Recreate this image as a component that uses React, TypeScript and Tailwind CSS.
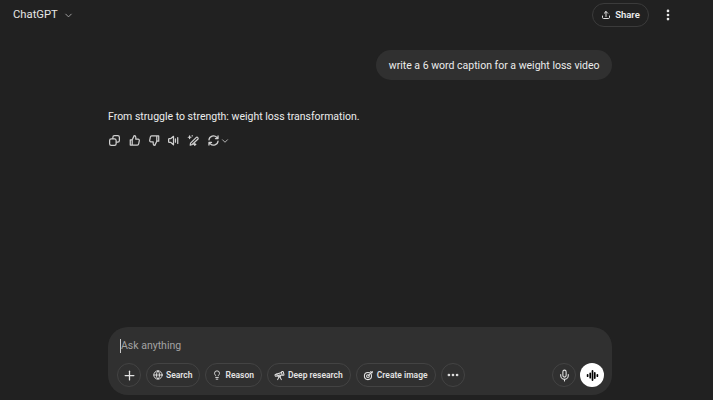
import { ChevronDown, Globe, Lightbulb, Mic, MoreHorizontal, MoreVertical, Plus, Telescope } from "lucide-react";
import type { ReactNode } from "react";

const font = { stroke: "currentColor", fill: "none", strokeWidth: 1.9, strokeLinecap: "round", strokeLinejoin: "round" } as const;

const Icon = ({ size = 13, children }: { size?: number; children: ReactNode }) => (
  <svg width={size} height={size} viewBox="0 0 20 20" {...font}>
    {children}
  </svg>
);

const actions = [
  <>
    <rect x="7.5" y="2.5" width="10" height="10" rx="2.5" />
    <rect x="2.5" y="7.5" width="10" height="10" rx="2.5" fill="#212121" />
  </>,
  <path d="M6.5 9l3-6.5c1.6 0 2.5 1 2.5 2.4V8h3.6c1.2 0 2 1 1.8 2.1l-1 5.2c-.2 1-1 1.7-2 1.7H6.5zM6.5 9H3.5v8h3" />,
  <path d="M13.5 11l-3 6.5c-1.6 0-2.5-1-2.5-2.4V12H4.4c-1.2 0-2-1-1.8-2.1l1-5.2c.2-1 1-1.7 2-1.7h7.9zM13.5 11h3V3h-3" />,
  <>
    <path d="M2.5 8v4c0 .6.4 1 1 1H6l4 3.5V3.5L6 7H3.5c-.6 0-1 .4-1 1z" />
    <path d="M13 7.5v5M16.5 5.5v9" />
  </>,
  <>
    <path d="M7.5 16.5L5 17l.5-3L14 5.5c.8-.8 2-.8 2.6 0 .7.7.7 1.8 0 2.5z" />
    <path d="M4 3v4M2 5h4M8 2.5v.5M12 14.5v3M10.5 16h3" />
  </>,
];

const Pill = ({ icon, label }: { icon: ReactNode; label: string }) => (
  <div className="flex h-6 items-center gap-[3px] rounded-full border border-[#434343] pr-[7px] pl-[6px] text-[8.5px] font-semibold text-[#e3e3e3]">
    {icon}
    <span className="whitespace-nowrap">{label}</span>
  </div>
);

const CircleBtn = ({ children }: { children: ReactNode }) => (
  <div className="flex size-6 items-center justify-center rounded-full border border-[#434343] text-[#e3e3e3]">{children}</div>
);

const App = () => {
  return (
    <div className="flex h-[400px] w-[713px] flex-col overflow-hidden bg-[#212121] font-['Roboto','Liberation_Sans',sans-serif] text-[#ececec]">
      <header className="flex h-[30px] flex-none items-center justify-between pr-[38px] pl-[13px]">
        <div className="flex items-center gap-[5px] text-[11.25px] text-[#e6e6e6]">
          ChatGPT
          <ChevronDown size={11} className="text-[#a8a8a8]" />
        </div>
        <div className="flex items-center gap-3">
          <div className="flex h-6 w-[57px] items-center justify-center gap-1 rounded-full border border-[#3b3b3b] text-[9.5px] font-semibold">
            <Icon size={10}>
              <path d="M10 13V3M6.5 6.5L10 3l3.5 3.5M3 12v3c0 1.2.8 2 2 2h10c1.2 0 2-.8 2-2v-3" />
            </Icon>
            Share
          </div>
          <MoreVertical size={14} strokeWidth={2.6} />
        </div>
      </header>

      <main className="ml-[108px] flex w-[504px] flex-1 flex-col">
        <div className="mt-5 self-end rounded-full bg-[#303030] px-[12.5px] pt-2 pb-[6px] text-[10.5px] leading-4 whitespace-nowrap">
          write a 6 word caption for a weight loss video
        </div>
        <p className="mt-[29px] text-[10.5px] leading-4">From struggle to strength: weight loss transformation.</p>
        <div className="mt-[9px] flex items-center gap-[6.8px] text-[#d0d0d0]">
          {actions.map((a, i) => (
            <Icon key={i}>{a}</Icon>
          ))}
          <div className="flex items-center">
            <Icon>
              <path d="M3 9a7 7 0 0 1 12-4l2 2M17 3v4h-4M17 11a7 7 0 0 1-12 4l-2-2M3 17v-4h4" />
            </Icon>
            <ChevronDown size={10} />
          </div>
        </div>
      </main>

      <div className="mb-[5px] ml-[108px] h-[68px] w-[504px] flex-none rounded-[20px] bg-[#303030] pt-[10px] pr-2 pl-[9px]">
        <div className="flex h-[18px] items-center pl-[3px] text-[10.5px] text-[#a3a3a3]">
          <span className="h-[14px] w-px bg-[#c8c8c8]" />
          Ask anything
        </div>
        <div className="mt-2 flex items-center gap-[5px]">
          <CircleBtn>
            <Plus size={15} />
          </CircleBtn>
          <Pill icon={<Globe size={10} strokeWidth={2.2} />} label="Search" />
          <Pill icon={<Lightbulb size={10} strokeWidth={2.2} />} label="Reason" />
          <Pill icon={<Telescope size={11} strokeWidth={2.2} />} label="Deep research" />
          <Pill
            icon={
              <Icon size={11}>
                <circle cx="9" cy="11" r="6.5" />
                <circle cx="9" cy="11" r="2.5" />
                <path d="M10 10l7-7M14 3l1 1.5 2 .5" />
              </Icon>
            }
            label="Create image"
          />
          <CircleBtn>
            <MoreHorizontal size={14} strokeWidth={2.6} />
          </CircleBtn>
          <div className="ml-auto flex items-center gap-1">
            <CircleBtn>
              <Mic size={13} />
            </CircleBtn>
            <div className="flex size-6 items-center justify-center rounded-full bg-white text-black">
              <svg width="13" height="13" viewBox="0 0 20 20" fill="none" stroke="currentColor" strokeWidth="2.6" strokeLinecap="round">
                <path d="M2.5 9v2M6.5 6.5v7M10 3v14M13.5 6v8M17.5 9v2" />
              </svg>
            </div>
          </div>
        </div>
      </div>
    </div>
  );
};

export default App;
